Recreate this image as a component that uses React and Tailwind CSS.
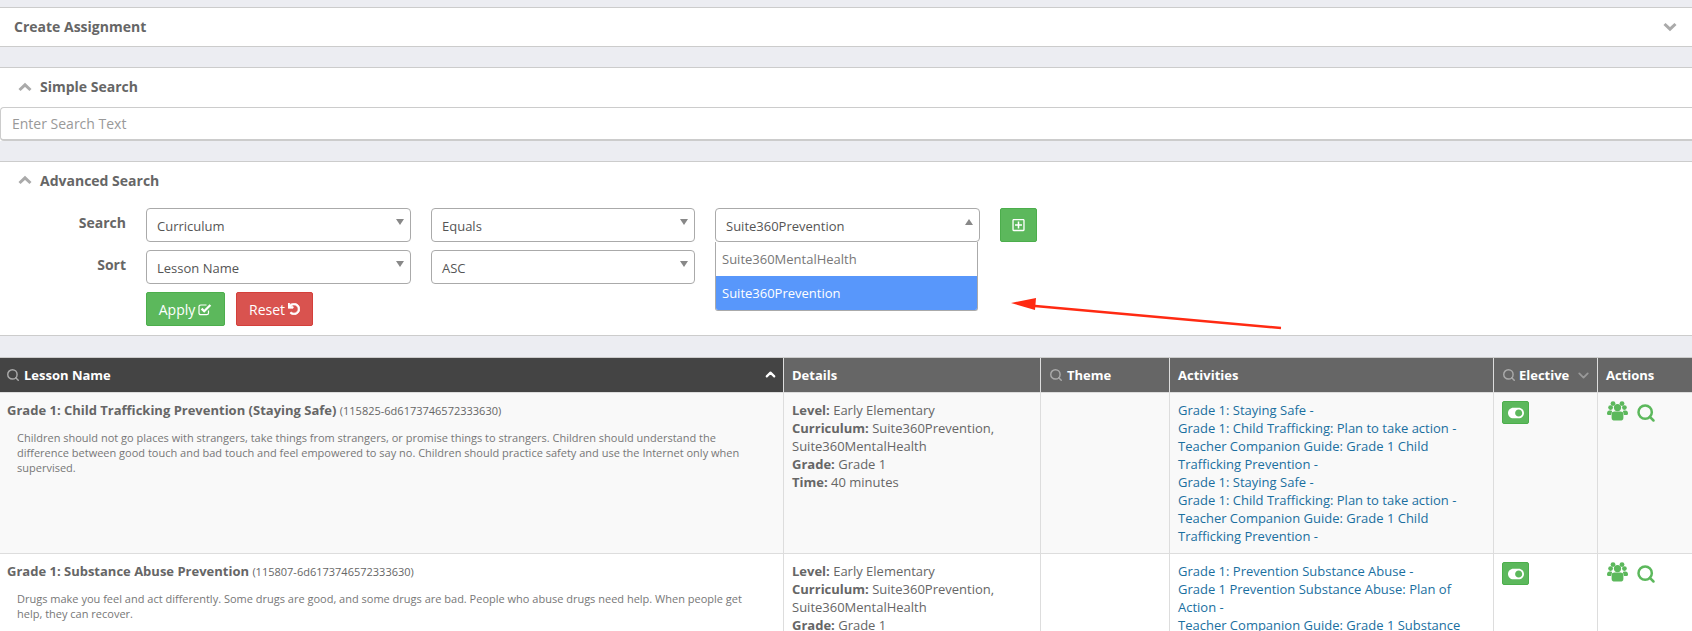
import React from "react";
import { FaUndo, FaRegPlusSquare, FaToggleOn } from "react-icons/fa";
import { Search, ChevronDown, ChevronUp } from "lucide-react";

const COLS = "grid grid-cols-[784px_257px_129px_324px_104px_94px]";

function Chevron({ up = false, className = "" }) {
  return (
    <svg className={className} width="14" height="10" viewBox="0 0 14 10">
      <path d={up ? "M1.5 8 L7 2.8 L12.5 8" : "M1.5 2 L7 7.2 L12.5 2"} fill="none" stroke="#aaa" strokeWidth="3" />
    </svg>
  );
}

function CheckSquare() {
  return (
    <svg width="14" height="13" viewBox="0 0 14 13" fill="none" stroke="currentColor">
      <path d="M10.5 7.5 V10 C10.5 11 9.8 11.7 8.8 11.7 H2.7 C1.7 11.7 1 11 1 10 V3.7 C1 2.7 1.7 2 2.7 2 H8.5" strokeWidth="1.2" />
      <path d="M3.6 5.6 L6.2 8.2 L12.4 2" strokeWidth="2.3" />
    </svg>
  );
}

function Users() {
  return (
    <svg width="21" height="20" viewBox="0 0 21 20" fill="#5cb85c">
      <circle cx="3.6" cy="6.6" r="2.4" />
      <circle cx="17.4" cy="6.6" r="2.4" />
      <circle cx="6" cy="2.6" r="2.4" />
      <circle cx="15" cy="2.6" r="2.4" />
      <circle cx="10.5" cy="6.6" r="3.6" />
      <path d="M0 13 C0 10 1.5 9.6 3.6 9.6 C4.5 9.6 5 10 5 10.6 L4 14 L0.8 14 Z" />
      <path d="M21 13 C21 10 19.5 9.6 17.4 9.6 C16.5 9.6 16 10 16 10.6 L17 14 L20.2 14 Z" />
      <path d="M4.6 13 C4.6 11 6 10.4 7.5 10.4 L13.5 10.4 C15 10.4 16.4 11 16.4 13 L16.4 17 C16.4 18.8 15 19.6 13.5 19.6 L7.5 19.6 C6 19.6 4.6 18.8 4.6 17 Z" />
    </svg>
  );
}

function Sel({ label, className = "", up = false }) {
  return (
    <div className={"relative h-[34px] border border-[#aaa] rounded-[4px] bg-white text-[#555] text-[13px] leading-[34px] pl-[10px] " + className}>
      {label}
      <span className={"absolute right-[6px] top-[10px] w-0 h-0 border-x-[4px] border-x-transparent " + (up ? "border-b-[6px] border-b-[#888]" : "border-t-[6px] border-t-[#888]")} />
    </div>
  );
}

function Row({ title, id, desc, curriculum, links, striped }) {
  return (
    <div className={COLS + " border-b border-[#ddd] " + (striped ? "bg-[#f9f9f9]" : "bg-white")}>
      <div className="pl-[7px] pr-2 pt-2 pb-2 border-r border-[#ddd]">
        <div className="text-[13px] leading-[18px] text-[#666]">
          <span className="font-bold">{title}</span> <span className="text-[11px] text-[#666]">{id}</span>
        </div>
        <div className="mt-[10px] ml-[10px] max-w-[730px] text-[11px] leading-[15px] text-[#777]">{desc}</div>
      </div>
      <div className="pl-2 pr-2 pt-2 border-r border-[#ddd] text-[13px] leading-[18px] text-[#666]">
        <div><b>Level:</b> Early Elementary</div>
        <div><b>Curriculum:</b> {curriculum}</div>
        <div><b>Grade:</b> Grade 1</div>
        <div><b>Time:</b> 40 minutes</div>
      </div>
      <div className="border-r border-[#ddd]" />
      <div className="px-2 py-2 border-r border-[#ddd] text-[13px] leading-[18px] text-[#1a6f9f]">
        {links.map((l, i) => <div key={i}>{l}</div>)}
      </div>
      <div className="pl-2 pt-2 border-r border-[#ddd]">
        <div className="w-[27px] h-[23px] rounded-[2px] bg-[#5cb85c] border border-[#4cae4c] flex items-center justify-center text-white">
          <FaToggleOn className="w-[16px] h-[16px]" />
        </div>
      </div>
      <div className="pl-[9px] pt-[8px] flex items-start gap-[8px] text-[#5cb85c]">
        <Users />
        <Search className="w-[20px] h-[20px] mt-[2px]" strokeWidth={3} />
      </div>
    </div>
  );
}

export default function App() {
  return (
    <div className="relative h-[631px] overflow-hidden bg-[#ecedf2] pt-[7px] font-['Open_Sans',sans-serif]">
      <section className="h-[40px] bg-white border-y border-[#ccc] flex items-center justify-between pl-[14px] pr-[15px]">
        <span className="text-[14px] font-bold text-[#666] -mt-[1px]">Create Assignment</span>
        <Chevron />
      </section>

      <section className="mt-[20px] bg-white border-t border-[#ccc]">
        <div className="h-[39px] pb-[2px] flex items-center pl-[18px] gap-[8px]">
          <Chevron up />
          <span className="text-[14px] font-bold text-[#666]">Simple Search</span>
        </div>
        <div className="h-[34px] pb-[1px] border-l border-t border-b-2 border-[#ccc] rounded-l-[4px] flex items-center pl-[11px] text-[14px] text-[#999]">Enter Search Text</div>
      </section>

      <section className="mt-[20px] h-[175px] bg-white border-y border-[#ccc]">
        <div className="h-[36px] flex items-center pl-[18px] gap-[8px]">
          <Chevron up />
          <span className="text-[14px] font-bold text-[#666]">Advanced Search</span>
        </div>
        <div className="mt-[10px] flex items-start">
          <div className="w-[126px] text-right text-[14px] font-bold text-[#666] leading-[30px]">Search</div>
          <Sel label="Curriculum" className="ml-[20px] w-[265px]" />
          <Sel label="Equals" className="ml-[20px] w-[264px]" />
          <div className="relative ml-[20px] w-[265px]">
            <Sel label="Suite360Prevention" up className="w-full" />
            <div className="absolute z-10 top-[34px] left-0 w-[263px] border border-t-0 border-[#aaa] rounded-b-[3px] bg-white text-[13px] overflow-hidden">
              <div className="h-[34px] leading-[34px] pl-[6px] text-[#777]">Suite360MentalHealth</div>
              <div className="h-[34px] leading-[34px] pl-[6px] bg-[#5897fb] text-white">Suite360Prevention</div>
            </div>
          </div>
          <button className="ml-[20px] w-[37px] h-[34px] rounded-[2px] bg-[#5cb85c] border border-[#4cae4c] flex items-center justify-center text-white">
            <FaRegPlusSquare className="w-[13px] h-[14px]" />
          </button>
        </div>
        <div className="mt-[8px] flex items-start">
          <div className="w-[126px] text-right text-[14px] font-bold text-[#666] leading-[30px]">Sort</div>
          <Sel label="Lesson Name" className="ml-[20px] w-[265px]" />
          <Sel label="ASC" className="ml-[20px] w-[264px]" />
        </div>
        <div className="mt-[8px] ml-[146px] flex gap-[11px]">
          <button className="w-[79px] h-[34px] rounded-[2px] bg-[#5cb85c] border border-[#4cae4c] text-white text-[14px] flex items-center justify-center gap-[3px]">
            Apply <CheckSquare />
          </button>
          <button className="w-[77px] h-[34px] rounded-[2px] bg-[#d9534f] border border-[#d43f3a] text-white text-[14px] flex items-center justify-center gap-[3px]">
            Reset <FaUndo className="w-[12px] h-[12px]" stroke="currentColor" strokeWidth="30" />
          </button>
        </div>
      </section>

      <section className="mt-[21px] border-t border-[#ccc]">
        <div className={COLS + " h-[35px] bg-[#666] text-white text-[13px] font-bold leading-[34px] border-b border-[#ddd]"}>
          <div className="bg-[#444] border-r border-[#ddd] flex items-center pl-[6px] pr-[5px] gap-[4px]">
            <Search className="w-[14px] h-[14px] text-[#aaa]" strokeWidth={2.5} />
            <span className="flex-1">Lesson Name</span>
            <ChevronUp className="w-[15px] h-[15px] mb-[2px]" strokeWidth={3.5} />
          </div>
          <div className="pl-2 border-r border-[#ddd]">Details</div>
          <div className="border-r border-[#ddd] flex items-center pl-[8px] gap-[4px]">
            <Search className="w-[14px] h-[14px] text-[#aaa]" strokeWidth={2.5} />Theme
          </div>
          <div className="pl-2 border-r border-[#ddd]">Activities</div>
          <div className="border-r border-[#ddd] flex items-center pl-[8px] gap-[3px]">
            <Search className="w-[14px] h-[14px] text-[#aaa]" strokeWidth={2.5} />Elective
            <ChevronDown className="w-[17px] h-[17px] ml-[3px] text-[#999]" strokeWidth={2.5} />
          </div>
          <div className="pl-2">Actions</div>
        </div>
        <Row
          striped
          title="Grade 1: Child Trafficking Prevention (Staying Safe)"
          id="(115825-6d6173746572333630)"
          desc="Children should not go places with strangers, take things from strangers, or promise things to strangers. Children should understand the difference between good touch and bad touch and feel empowered to say no. Children should practice safety and use the Internet only when supervised."
          curriculum="Suite360Prevention, Suite360MentalHealth"
          links={[
            "Grade 1: Staying Safe -",
            "Grade 1: Child Trafficking: Plan to take action -",
            "Teacher Companion Guide: Grade 1 Child Trafficking Prevention -",
            "Grade 1: Staying Safe -",
            "Grade 1: Child Trafficking: Plan to take action -",
            "Teacher Companion Guide: Grade 1 Child Trafficking Prevention -",
          ]}
        />
        <Row
          title="Grade 1: Substance Abuse Prevention"
          id="(115807-6d6173746572333630)"
          desc="Drugs make you feel and act differently. Some drugs are good, and some drugs are bad. People who abuse drugs need help. When people get help, they can recover."
          curriculum="Suite360Prevention, Suite360MentalHealth"
          links={[
            "Grade 1: Prevention Substance Abuse -",
            "Grade 1 Prevention Substance Abuse: Plan of Action -",
            "Teacher Companion Guide: Grade 1 Substance Abuse Prevention -",
          ]}
        />
      </section>

      <svg className="absolute left-0 top-0 pointer-events-none z-20" width="1692" height="631">
        <line x1="1281" y1="328" x2="1024" y2="305" stroke="#ff2a12" strokeWidth="2.5" />
        <polygon points="1011,303 1036,298 1035,310" fill="#ff2a12" />
      </svg>
    </div>
  );
}
